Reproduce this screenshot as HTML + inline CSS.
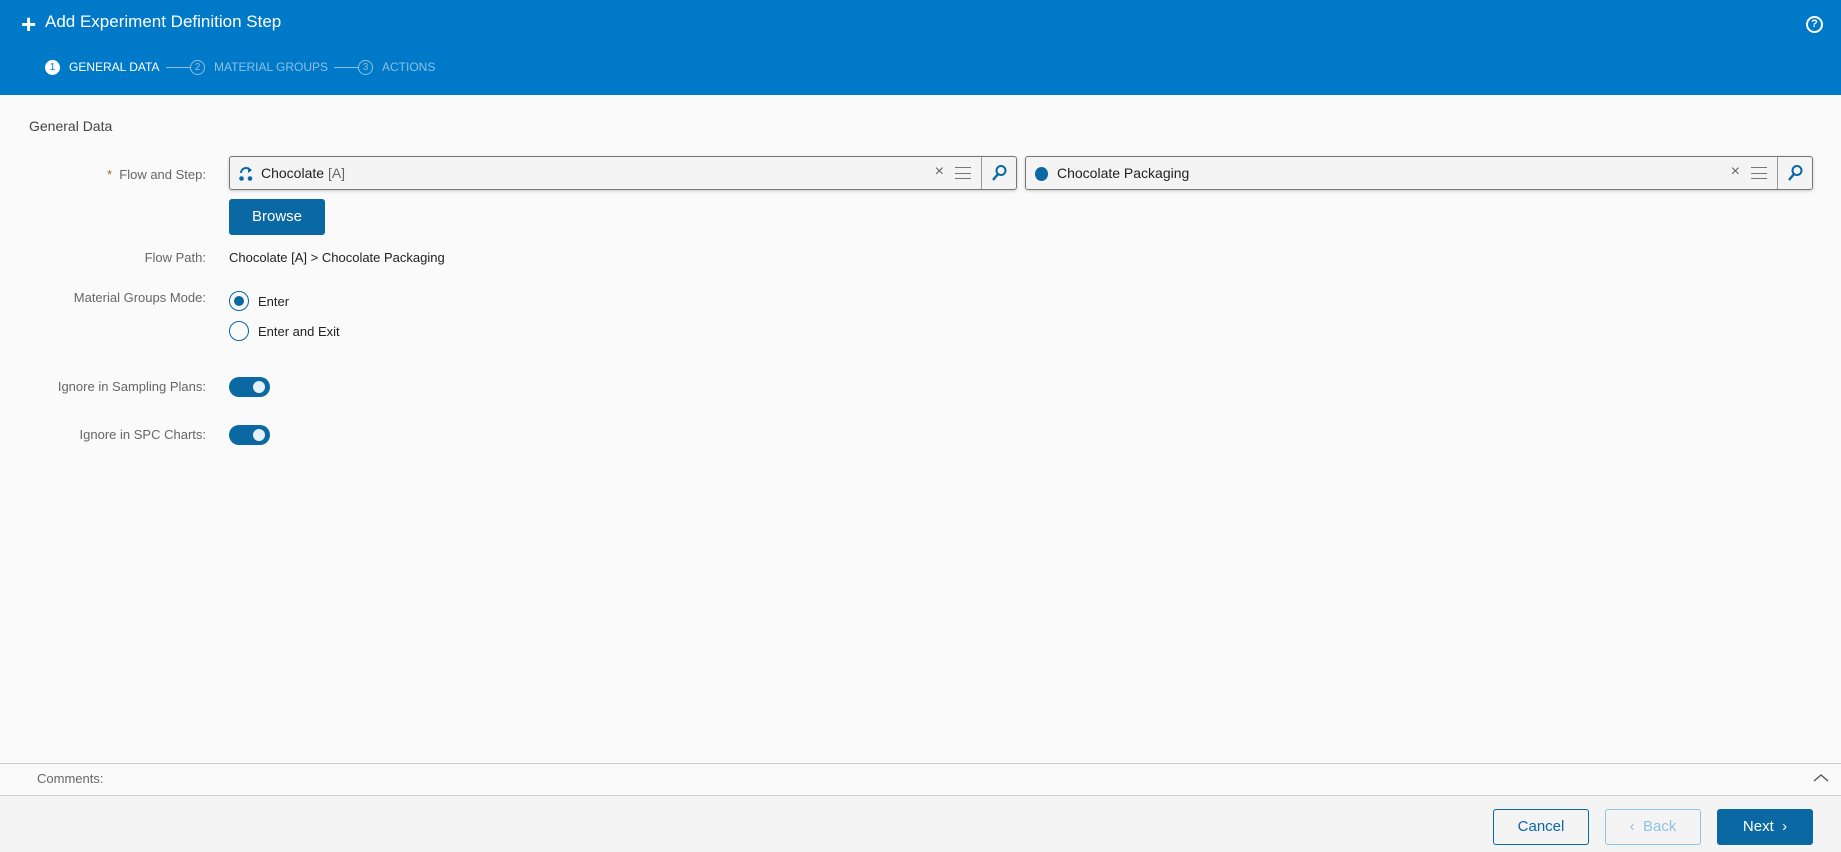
<!DOCTYPE html>
<html><head><meta charset="utf-8"><style>
*{box-sizing:border-box;margin:0;padding:0}
body{width:1841px;height:852px;background:#fafafa;font-family:"Liberation Sans",sans-serif;position:relative;overflow:hidden;color:#333}
.hdr{position:absolute;left:0;top:0;width:1841px;height:95px;background:#0079c8;color:#fff}
.abs{position:absolute}
.lbl{position:absolute;right:1635px;font-size:13px;color:#666;white-space:nowrap}
.inp{position:absolute;top:156px;height:34px;border:1px solid #777;border-radius:3px;background:#f4f4f4;box-shadow:0 1px 3px rgba(0,0,0,.2)}
.inp .sb{position:absolute;right:0;top:0;width:35px;height:32px;border-left:1px solid #999}
.btn{position:absolute;top:809px;width:96px;height:36px;border-radius:3px;font-size:15px;text-align:center;line-height:34px}
.tog{position:absolute;left:229px;width:41px;height:20px;border-radius:10px;background:#0a68a3}
.tog::after{content:"";position:absolute;right:5px;top:4px;width:12px;height:12px;border-radius:50%;background:#e6f0f5}
</style></head><body>
<div class="hdr">
 <div class="abs" style="left:21px;top:13px;font-size:26px;font-weight:bold;line-height:22px">+</div>
 <div class="abs" style="left:45px;top:12px;font-size:17px">Add Experiment Definition Step</div>
 <div class="abs" style="left:1806px;top:16px;width:17px;height:17px;border:2px solid #fff;border-radius:50%;font-size:11px;font-weight:bold;text-align:center;line-height:13px">?</div>
 <div class="abs" style="left:45px;top:60px;width:15px;height:15px;border-radius:50%;background:#fff;color:#0079c8;font-size:10px;text-align:center;line-height:15px">1</div>
 <div class="abs" style="left:69px;top:60px;font-size:12px">GENERAL DATA</div>
 <div class="abs" style="left:166px;top:67px;width:24px;border-top:1px solid #8cc0e6"></div>
 <div class="abs" style="left:190px;top:60px;width:15px;height:15px;border-radius:50%;border:1px solid #8cc0e6;color:#8cc0e6;font-size:10px;text-align:center;line-height:13px">2</div>
 <div class="abs" style="left:214px;top:60px;font-size:12px;color:#8cc0e6">MATERIAL GROUPS</div>
 <div class="abs" style="left:334px;top:67px;width:24px;border-top:1px solid #8cc0e6"></div>
 <div class="abs" style="left:358px;top:60px;width:15px;height:15px;border-radius:50%;border:1px solid #8cc0e6;color:#8cc0e6;font-size:10px;text-align:center;line-height:13px">3</div>
 <div class="abs" style="left:382px;top:60px;font-size:12px;color:#8cc0e6">ACTIONS</div>
</div>
<div class="abs" style="left:29px;top:118px;font-size:14px;color:#444">General Data</div>
<div class="lbl" style="top:167px"><span style="color:#b5651d">*</span>&nbsp; Flow and Step:</div>
<div class="inp" style="left:229px;width:788px">
 <svg class="abs" style="left:8px;top:9px" width="16" height="16" viewBox="0 0 16 16"><path d="M3 7 A5 5 0 0 1 12 4" fill="none" stroke="#0a68a3" stroke-width="2"/><path d="M10 1 L14 4 L10 7Z" fill="#0a68a3"/><circle cx="3.5" cy="12.5" r="2.3" fill="#0a68a3"/><circle cx="12" cy="12.5" r="2.3" fill="#0a68a3"/></svg>
 <div class="abs" style="left:31px;top:8px;font-size:14px;color:#222">Chocolate <span style="color:#666">[A]</span></div>
 <div class="abs" style="right:72px;top:6px;font-size:16px;color:#666">×</div>
 <div class="abs" style="right:45px;top:10px;width:16px;height:12px;border-top:1px solid #777;border-bottom:1px solid #777"><div style="margin-top:5px;border-top:1px solid #777"></div></div>
 <div class="sb"><svg class="abs" style="left:9px;top:7px" width="17" height="18" viewBox="0 0 17 18"><circle cx="10" cy="6.5" r="4.5" fill="none" stroke="#0a68a3" stroke-width="2"/><path d="M7 10 L2 16" stroke="#0a68a3" stroke-width="2.4"/></svg></div>
</div>
<div class="inp" style="left:1025px;width:788px">
 <div class="abs" style="left:9px;top:10px;width:13px;height:14px;border-radius:50%;background:#0a68a3"></div>
 <div class="abs" style="left:31px;top:8px;font-size:14px;color:#222">Chocolate Packaging</div>
 <div class="abs" style="right:72px;top:6px;font-size:16px;color:#666">×</div>
 <div class="abs" style="right:45px;top:10px;width:16px;height:12px;border-top:1px solid #777;border-bottom:1px solid #777"><div style="margin-top:5px;border-top:1px solid #777"></div></div>
 <div class="sb"><svg class="abs" style="left:9px;top:7px" width="17" height="18" viewBox="0 0 17 18"><circle cx="10" cy="6.5" r="4.5" fill="none" stroke="#0a68a3" stroke-width="2"/><path d="M7 10 L2 16" stroke="#0a68a3" stroke-width="2.4"/></svg></div>
</div>
<div class="abs" style="left:229px;top:199px;width:96px;height:36px;background:#0a68a3;border-radius:3px;color:#fff;font-size:15px;text-align:center;line-height:36px">Browse</div>
<div class="lbl" style="top:250px">Flow Path:</div>
<div class="abs" style="left:229px;top:250px;font-size:13px;color:#222">Chocolate [A] &gt; Chocolate Packaging</div>
<div class="lbl" style="top:290px">Material Groups Mode:</div>
<div class="abs" style="left:229px;top:291px;width:20px;height:20px;border-radius:50%;border:1.5px solid #0a68a3"><div style="margin:3.5px;width:10px;height:10px;border-radius:50%;background:#0a68a3"></div></div>
<div class="abs" style="left:258px;top:294px;font-size:13px;color:#222">Enter</div>
<div class="abs" style="left:229px;top:321px;width:20px;height:20px;border-radius:50%;border:1.5px solid #0a68a3"></div>
<div class="abs" style="left:258px;top:324px;font-size:13px;color:#222">Enter and Exit</div>
<div class="lbl" style="top:379px">Ignore in Sampling Plans:</div>
<div class="tog" style="top:377px"></div>
<div class="lbl" style="top:427px">Ignore in SPC Charts:</div>
<div class="tog" style="top:425px"></div>
<div class="abs" style="left:0;top:763px;width:1841px;border-top:1px solid #ccc"></div>
<div class="abs" style="left:37px;top:771px;font-size:13px;color:#666">Comments:</div>
<svg class="abs" style="left:1813px;top:773px" width="16" height="10" viewBox="0 0 16 10"><path d="M1 8 L8 2 L15 8" fill="none" stroke="#555" stroke-width="1.4"/></svg>
<div class="abs" style="left:0;top:795px;width:1841px;height:57px;background:#f4f4f4;border-top:1px solid #ccc"></div>
<div class="btn" style="left:1493px;border:1px solid #0a68a3;color:#0a68a3">Cancel</div>
<div class="btn" style="left:1605px;border:1px solid #8ec3e3;color:#8ec3e3">‹&nbsp; Back</div>
<div class="btn" style="left:1717px;background:#0a68a3;color:#fff;border:1px solid #0a68a3">Next&nbsp; ›</div>
</body></html>
